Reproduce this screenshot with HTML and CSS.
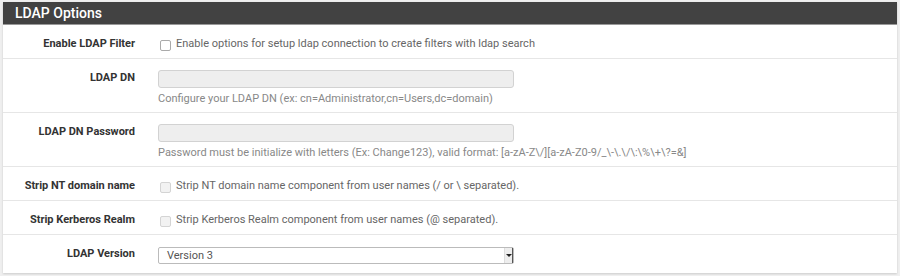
FILE: index.html
```html
<!DOCTYPE html>
<html lang="en">
<head>
  <meta charset="UTF-8">
  <title>LDAP Options</title>
  <link rel="stylesheet" href="styles.css">
</head>
<body>
  <div class="panel">
    <div class="panel-heading">LDAP Options</div>

    <div class="row">
      <label class="row-label">Enable LDAP Filter</label>
      <div class="row-body">
        <label class="check"><span class="box"></span>Enable options for setup ldap connection to create filters with ldap search</label>
      </div>
    </div>

    <div class="row has-field">
      <label class="row-label">LDAP DN</label>
      <div class="row-body">
        <div class="field"></div>
        <div class="help">Configure your LDAP DN (ex: cn=Administrator,cn=Users,dc=domain)</div>
      </div>
    </div>

    <div class="row has-field">
      <label class="row-label">LDAP DN Password</label>
      <div class="row-body">
        <div class="field"></div>
        <div class="help">Password must be initialize with letters (Ex: Change123), valid format: [a-zA-Z\/][a-zA-Z0-9/_\-\.\/\:\%\+\?=&amp;]</div>
      </div>
    </div>

    <div class="row">
      <label class="row-label">Strip NT domain name</label>
      <div class="row-body">
        <label class="check off"><span class="box"></span>Strip NT domain name component from user names (/ or \ separated).</label>
      </div>
    </div>

    <div class="row">
      <label class="row-label">Strip Kerberos Realm</label>
      <div class="row-body">
        <label class="check off"><span class="box"></span>Strip Kerberos Realm component from user names (@ separated).</label>
      </div>
    </div>

    <div class="row last">
      <label class="row-label">LDAP Version</label>
      <div class="row-body">
        <div class="select">
          <span>Version 3</span>
          <span class="select-btn"></span>
        </div>
      </div>
    </div>
  </div>
</body>
</html>
```

FILE: styles.css
```css
body {
  margin: 0;
  padding: 2px 3px;
  background: #efefef;
  font-family: Roboto, "Liberation Sans", sans-serif;
  font-size: 11px;
  color: #333;
}
.panel {
  background: #fff;
  box-shadow: 0 1px 2px rgba(0,0,0,0.15);
}
.panel-heading {
  background: #424242;
  color: #fff;
  font-size: 14px;
  font-weight: 500;
  height: 22px;
  line-height: 22px;
  padding-left: 12px;
  border-bottom: 1px solid #999;
}
.row {
  display: flex;
  border-bottom: 1px solid #e6e6e6;
  padding: 10px 0 6px;
  line-height: 17px;
}
.row.has-field {
  padding-bottom: 5px;
}
.row.last {
  border-bottom: none;
  padding-bottom: 9px;
}
.row-label {
  width: 132px;
  flex: none;
  text-align: right;
  font-weight: bold;
  color: #333;
}
.row-body {
  margin-left: 23px;
  color: #666;
}
.check {
  display: flex;
  align-items: center;
}
.box {
  width: 9px;
  height: 9px;
  border: 1px solid #aaa;
  border-radius: 2px;
  background: #fff;
  margin: 3px 5px 0 2px;
}
.check.off .box {
  border-color: #d4d4d4;
  background: #f2f2f2;
}
.field {
  width: 354px;
  height: 16px;
  margin-top: 1px;
  border: 1px solid #d2d2d2;
  border-radius: 3px;
  background: #eee;
}
.help {
  margin-top: 3px;
  line-height: 16px;
  color: #888;
}
.select {
  display: flex;
  justify-content: space-between;
  align-items: center;
  width: 354px;
  height: 15px;
  margin-top: 2px;
  border: 1px solid #bbb;
  border-radius: 2px;
  color: #555;
}
.select span:first-child {
  padding-left: 8px;
}
.select-btn {
  position: relative;
  width: 7px;
  height: 15px;
  background: #eee;
  border-left: 1px solid #ddd;
  border-right: 1px solid #555;
}
.select-btn::after {
  content: "";
  position: absolute;
  left: 1px;
  top: 6px;
  border-left: 3px solid transparent;
  border-right: 3px solid transparent;
  border-top: 3px solid #222;
}
```
